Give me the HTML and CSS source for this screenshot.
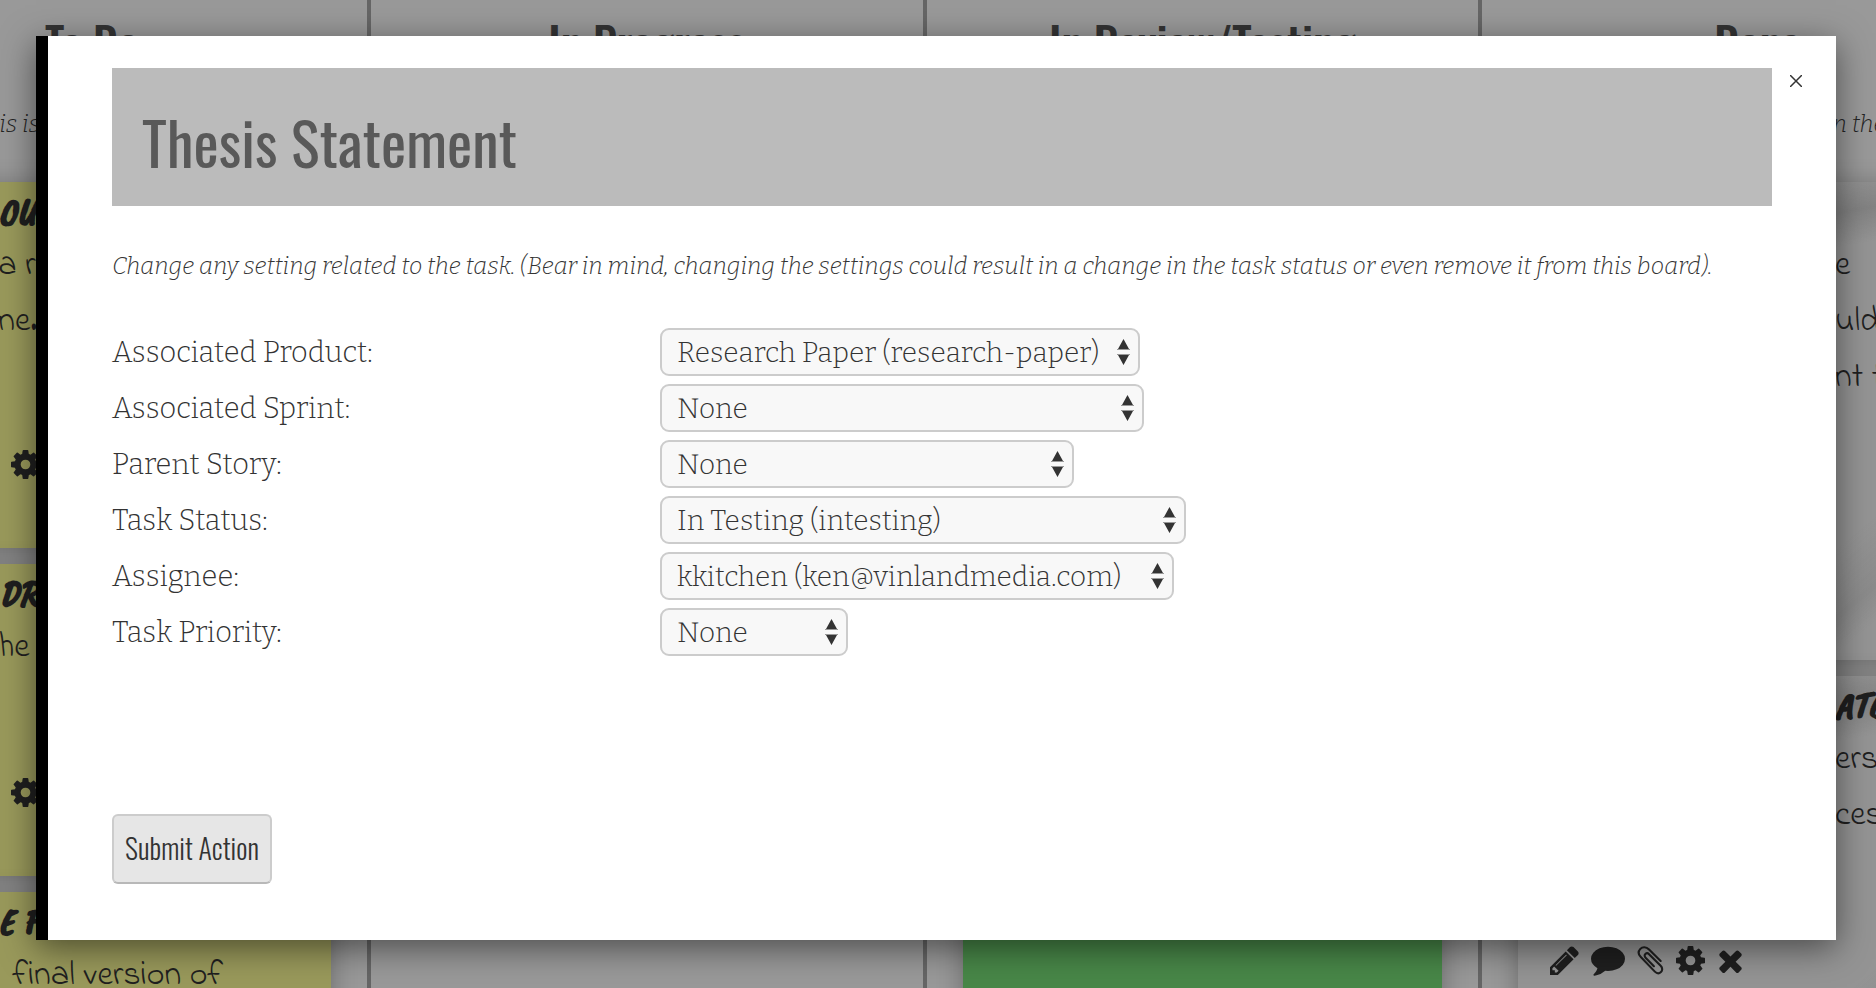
FILE: index.html
```html
<!DOCTYPE html>
<html lang="en">
<head>
<meta charset="utf-8">
<title>Task Board</title>
<link rel="stylesheet" href="styles.css">
</head>
<body>
<svg class="sprite" aria-hidden="true">
  <symbol id="cog" viewBox="128 128 1536 1536"><path d="M1152 896q0-106-75-181t-181-75-181 75-75 181 75 181 181 75 181-75 75-181zm512-109v222q0 12-8 23t-20 13l-185 28q-19 54-39 91 35 50 107 138 10 12 10 25t-9 23q-27 37-99 108t-94 71q-12 0-26-9l-138-108q-44 23-91 38-16 136-29 186-7 28-36 28h-222q-14 0-24.500-8.500t-11.500-21.500l-28-184q-49-16-90-37l-141 107q-10 9-25 9-14 0-25-11-126-114-165-168-7-10-7-23 0-12 8-23 15-21 51-66.500t54-70.500q-27-50-41-99l-183-27q-13-2-21-12.500t-8-23.500v-222q0-12 8-23t19-13l186-28q14-46 39-92-40-57-107-138-10-12-10-24 0-10 9-23 26-36 98.500-107.500t94.500-71.500q13 0 26 10l138 107q44-23 91-38 16-136 29-186 7-28 36-28h222q14 0 24.500 8.500t11.500 21.500l28 184q49 16 90 37l142-107q9-9 24-9 13 0 25 10 129 119 165 170 7 8 7 22 0 12-8 23-15 21-51 66.500t-54 70.500q26 50 41 98l183 28q13 2 21 12.500t8 23.500z"/></symbol>
  <symbol id="pencil" viewBox="128 128 1536 1536"><path d="M491 1536l91-91-235-235-91 91v107h128v128h107zm523-928q0-22-22-22-10 0-17 7l-542 542q-7 7-7 17 0 22 22 22 10 0 17-7l542-542q7-7 7-17zm-54-192l416 416-832 832h-416v-416zm683 96q0 53-37 90l-166 166-416-416 166-165q36-38 90-38 53 0 91 38l235 234q37 39 37 91z"/></symbol>
  <symbol id="comment" viewBox="0 128 1792 1664"><path d="M1792 896q0 174-120 321.500t-326 233-450 85.500q-70 0-145-8-198 175-460 242-49 14-114 22h-5q-15 0-27-10.500t-16-27.500v-1q-3-4-.5-12t2-10 4.500-9.500l6-9 7-8.500 8-9q7-8 31-34.500t34.500-38 31-39.500 32.500-51 27-59 26-76q-157-89-247.500-220t-90.500-281q0-174 120-321.500t326-233 450-85.500 450 85.500 326 233 120 321.500z"/></symbol>
  <symbol id="clip" viewBox="0 0 27 30"><path d="M24 15.500 12 3.500C9 .5 5 .8 3 3S.5 8.500 3.500 11.500L18 26.500c2 2 4.500 2.200 6.300.5s1.700-4.500-.3-6.500L12 8.500c-1.200-1.200-2.700-1.200-3.800-.2s-1 2.600.2 3.800l8.600 8.800" fill="none" stroke="currentColor" stroke-width="2.200" stroke-linecap="round"/></symbol>
  <symbol id="times" viewBox="192 128 1408 1536"><path d="M1490 1322q0 40-28 68l-136 136q-28 28-68 28t-68-28l-294-294-294 294q-28 28-68 28t-68-28l-136-136q-28-28-28-68t28-68l294-294-294-294q-28-28-28-68t28-68l136-136q28-28 68-28t68 28l294 294 294-294q28-28 68-28t68 28l136 136q28 28 28 68t-28 68l-294 294 294 294q28 28 28 68z"/></symbol>
  <symbol id="arrows" viewBox="0 0 13 26"><path d="M6.500 0 12 10H1zM1 16h11L6.500 26z" fill="#333"/><path d="M0 10.500h13M0 15.500h13" stroke="#999"/></symbol>
</svg>

<main class="board">
  <section class="column">
    <h2 class="column-title">To Do</h2>
    <p class="column-note note-start">This is</p>
    <article class="card yellow tall">
      <h3 class="card-title">Ou</h3>
      <p class="card-text">a re<br>ne.</p>
      <div class="card-tools"><svg class="icon"><use href="#cog"/></svg></div>
    </article>
    <article class="card yellow">
      <h3 class="card-title">Dr</h3>
      <p class="card-text">he</p>
      <div class="card-tools"><svg class="icon"><use href="#cog"/></svg></div>
    </article>
    <article class="card yellow">
      <h3 class="card-title">E F</h3>
      <p class="card-text inset">final version of</p>
    </article>
  </section>
  <section class="column">
    <h2 class="column-title">In Progress</h2>
  </section>
  <section class="column">
    <h2 class="column-title">In Review/Testing</h2>
    <p class="column-note"></p>
    <article class="card green"></article>
  </section>
  <section class="column done">
    <h2 class="column-title">Done</h2>
    <p class="column-note note-end">in the</p>
    <article class="card paper first">
      <h3 class="card-title"></h3>
      <p class="card-text">e<br>uld<br>nt t</p>
    </article>
    <article class="card paper second">
      <h3 class="card-title">ATE</h3>
      <p class="card-text">ers<br>ces</p>
      <div class="card-tools">
        <svg class="icon"><use href="#pencil"/></svg>
        <svg class="icon wide"><use href="#comment"/></svg>
        <svg class="icon narrow"><use href="#clip"/></svg>
        <svg class="icon"><use href="#cog"/></svg>
        <svg class="icon narrow"><use href="#times"/></svg>
      </div>
    </article>
  </section>
</main>

<div class="modal" role="dialog" aria-labelledby="modal-title">
  <button class="close" type="button" aria-label="Close"><svg class="close-icon" viewBox="0 0 12 12"><path d="M0 0l12 12M12 0 0 12"/></svg></button>
  <header class="modal-header"><h1 class="modal-title" id="modal-title">Thesis Statement</h1></header>
  <p class="modal-intro">Change any setting related to the task. (Bear in mind, changing the settings could result in a change in the task status or even remove it from this board).</p>
  <form class="form">
    <div class="fields">
      <label class="label" for="product">Associated Product:</label>
      <div class="picker w-product"><select class="select" id="product"><option>Research Paper (research-paper)</option></select><svg class="arrows"><use href="#arrows"/></svg></div>
      <label class="label" for="sprint">Associated Sprint:</label>
      <div class="picker w-sprint"><select class="select" id="sprint"><option>None</option></select><svg class="arrows"><use href="#arrows"/></svg></div>
      <label class="label" for="story">Parent Story:</label>
      <div class="picker w-story"><select class="select" id="story"><option>None</option></select><svg class="arrows"><use href="#arrows"/></svg></div>
      <label class="label" for="status">Task Status:</label>
      <div class="picker w-status"><select class="select" id="status"><option>In Testing (intesting)</option></select><svg class="arrows"><use href="#arrows"/></svg></div>
      <label class="label" for="assignee">Assignee:</label>
      <div class="picker w-assignee"><select class="select" id="assignee"><option>kkitchen (ken@vinlandmedia.com)</option></select><svg class="arrows"><use href="#arrows"/></svg></div>
      <label class="label" for="priority">Task Priority:</label>
      <div class="picker w-priority"><select class="select" id="priority"><option>None</option></select><svg class="arrows"><use href="#arrows"/></svg></div>
    </div>
    <button class="submit" type="submit">Submit Action</button>
  </form>
</div>
</body>
</html>
```
FILE: styles.css
```css
:root {
  --slab: "Roboto Slab", Bitter, Roboto, serif;
  --condensed: Oswald, "Liberation Sans Narrow", "Liberation Sans", sans-serif;
  --hand: "Indie Flower", "Open Sans", sans-serif;
  --marker: "Permanent Marker", "Caveat Brush", "Open Sans", sans-serif;
}

* { box-sizing: border-box; }

body {
  margin: 0;
  height: 100vh;
  overflow: hidden;
  background: #999;
  color: #333;
  font-family: var(--slab);
  font-weight: 300;
}

.sprite { position: absolute; width: 0; height: 0; }

/* Board */
.board {
  display: grid;
  grid-template-columns: repeat(4, 1fr);
  width: 118.4%;
  height: 100vh;
  margin-left: -9.8%;
  overflow: hidden;
}

.column {
  display: flex;
  flex-direction: column;
  gap: 16px;
  padding: 14px 36px 0;
  border-right: 4px solid #666;
}

.column-title {
  margin: 0;
  height: 60px;
  font: 500 45px/56px var(--condensed);
  text-align: center;
}

.column-note {
  margin: 0;
  height: 76px;
  padding-top: 16px;
  color: #222;
  font-size: 24px;
  font-style: italic;
  line-height: 36px;
  white-space: nowrap;
}

.note-start { padding-left: 120px; }
.note-end { padding-left: 308px; }

.card {
  display: flex;
  flex-direction: column;
  flex: none;
  height: 312px;
  padding: 4px 0 0 146px;
  color: #1f1f1f;
  font-family: var(--hand);
  box-shadow: 0 4px 24px rgba(0, 0, 0, 0.3);
}

.yellow { background: #99995b; }
.tall { height: 366px; }
.green { height: 860px; background: #488748; }

.paper {
  padding-left: 317px;
  background:
    linear-gradient(170deg, transparent 50px, rgba(50, 50, 50, 0.18) 86px, transparent 120px),
    linear-gradient(140deg, transparent 72%, rgba(60, 60, 60, 0.1) 80%, transparent 84%),
    #949494;
}

.first { height: 478px; }
.second { height: 420px; }

.card-title {
  margin: 0;
  height: 52px;
  font: italic 700 38px/52px var(--marker);
  text-transform: uppercase;
  white-space: nowrap;
}

.card-text {
  margin: 0;
  font-size: 34px;
  font-weight: 400;
  font-variant-ligatures: none;
  line-height: 56px;
  white-space: nowrap;
}

.inset { padding-left: 14px; }

.card-tools {
  display: flex;
  align-items: center;
  gap: 12px;
  margin-top: auto;
  padding: 0 0 69px 13px;
}

.second .card-tools { margin-left: -285px; padding: 0 0 120px; }

.icon { width: 29px; height: 29px; fill: currentColor; }
.wide { width: 34px; height: 32px; }
.narrow { width: 27px; }

/* Dialog */
.modal {
  position: absolute;
  inset: 36px 40px 48px 36px;
  padding: 32px 64px;
  border-left: 12px solid #000;
  background: #fff;
  box-shadow: 0 8px 32px rgba(0, 0, 0, 0.5);
}

.close {
  position: absolute;
  top: 33px;
  right: 28px;
  display: grid;
  place-items: center;
  width: 24px;
  height: 24px;
  padding: 0;
  border: 0;
  background: none;
}

.close-icon { width: 12px; height: 12px; stroke: #333; stroke-width: 1.5; }

.modal-header { padding: 29px 30px 21px; background: #bbb; }

.modal-title {
  margin: 0;
  color: #595959;
  font: 400 60px/88px var(--condensed);
}

.modal-intro {
  margin: 40px 0 42px;
  font-size: 24px;
  font-style: italic;
  line-height: 40px;
}

.fields {
  display: grid;
  grid-template-columns: 548px 1fr;
  gap: 8px 0;
}

.label { padding-top: 2px; font-size: 29px; line-height: 46px; }

.picker { position: relative; height: 48px; }

.w-product { width: 480px; }
.w-sprint { width: 484px; }
.w-story { width: 414px; }
.w-status { width: 526px; }
.w-assignee { width: 514px; }
.w-priority { width: 188px; }

.select {
  appearance: none;
  width: 100%;
  height: 100%;
  padding: 0 24px 0 15px;
  border: 2px solid #ccc;
  border-radius: 9px;
  background: #f8f8f8;
  color: #333;
  font: 300 28px var(--slab);
}

.arrows {
  position: absolute;
  top: 11px;
  right: 10px;
  width: 13px;
  height: 26px;
  pointer-events: none;
}

.submit {
  margin-top: 158px;
  width: 160px;
  height: 70px;
  padding: 0 0 3px;
  border: 2px solid #ccc;
  border-bottom-color: #b8b8b8;
  border-radius: 6px;
  background: #e6e6e6;
  color: #333;
  font: 300 28px var(--condensed);
  white-space: nowrap;
}
```
